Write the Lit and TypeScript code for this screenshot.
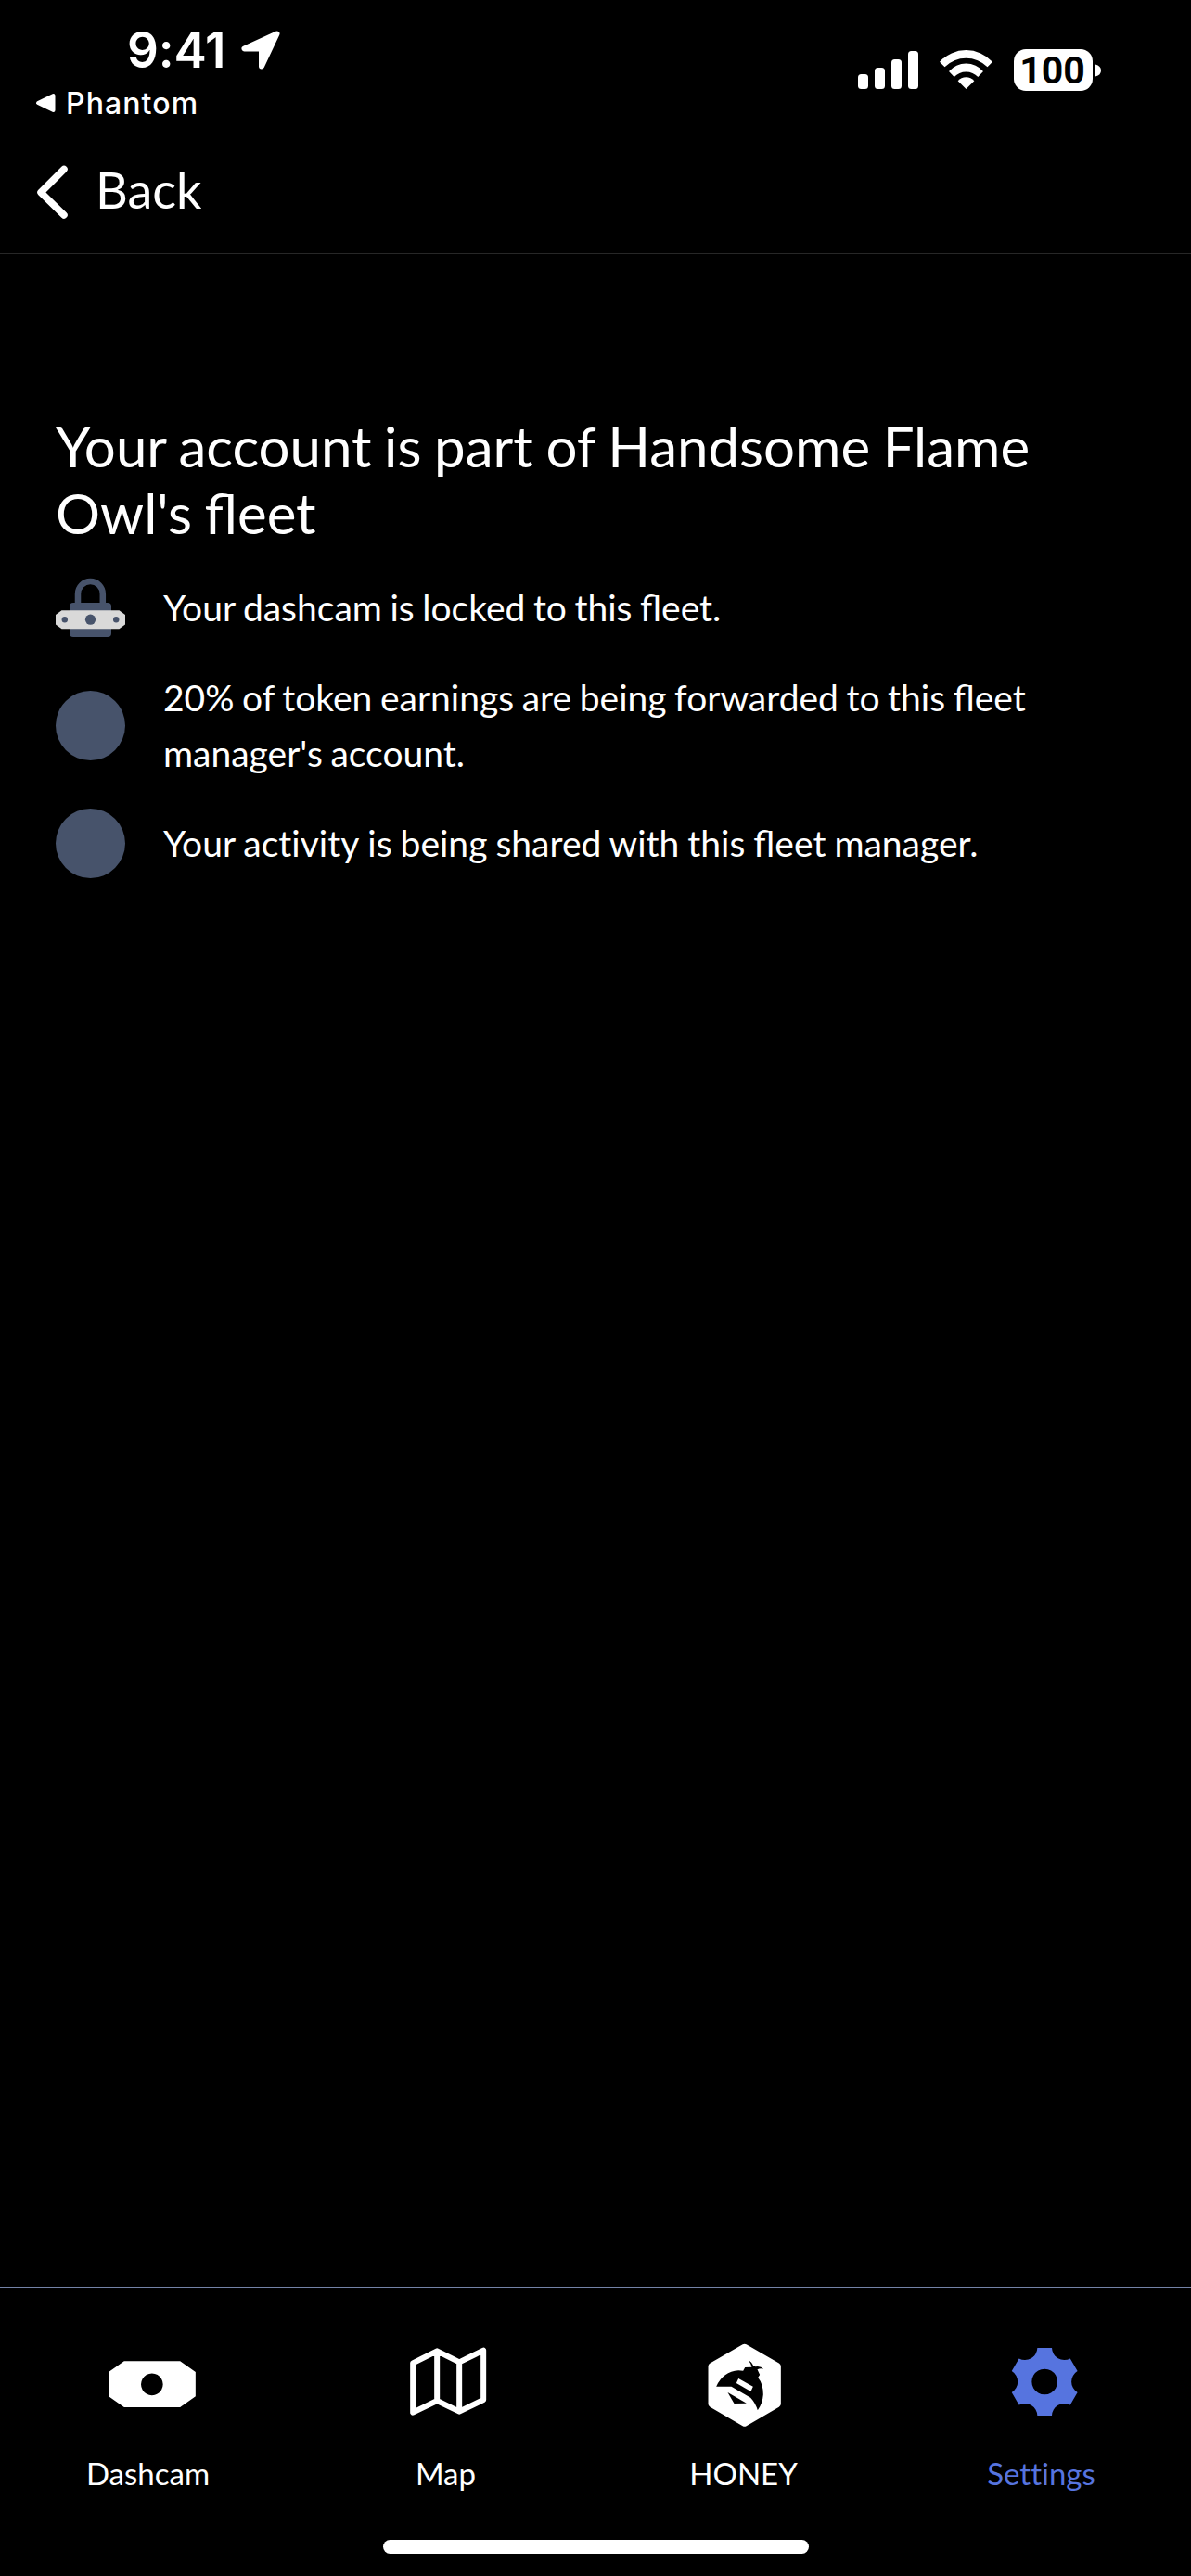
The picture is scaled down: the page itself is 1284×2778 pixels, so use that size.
import { LitElement, html, css, svg, TemplateResult } from "lit";
import { customElement, property } from "lit/decorators.js";

interface Tab {
  label: string;
  viewBox: string;
  icon: TemplateResult;
  active?: boolean;
}

const TABS: Tab[] = [
  {
    label: "Dashcam",
    viewBox: "119.5 240 360 330",
    icon: svg`<path fill="currentColor" fill-rule="evenodd" d="M221 319H402L452 354V433L402 468H221L171 433V354ZM311 358.5a35.5 35.5 0 1 0 .1 0Z"/>`,
  },
  {
    label: "Map",
    viewBox: "1082.5 240 360 330",
    icon: svg`<path fill="none" stroke="currentColor" stroke-width="18" stroke-linejoin="round" d="M1155 325L1233 286L1305 322L1383 284V444L1305 482L1233 447L1155 485ZM1233 286V447M1305 322V482"/>`,
  },
  {
    label: "HONEY",
    viewBox: "65.5 60 360 330",
    icon: svg`
      <path fill="currentColor" stroke="currentColor" stroke-width="24" stroke-linejoin="round" d="M247.500 95L353 156V277L247.500 338L142 277V156Z"/>
      <path fill="#000" d="M156 221Q178 173 228 169L243 170L249 159L271 158Q269 147 261 137Q271 141 276 154L283 157Q299 154 309 164Q298 161 289 166L297 183L291 192Q308 213 308 247Q306 276 290 298Q283 274 267 257L205 221Z"/>
      <path fill="currentColor" d="M228 195L275 221L268 237L221 210Z"/>
      <path fill="#000" d="M193 240L254 275L214 276Z"/>`,
  },
  {
    label: "Settings",
    viewBox: "69 60 360 330",
    active: true,
    icon: svg`<g transform="translate(258.500 205.500)"><path fill="currentColor" fill-rule="evenodd" d="M-23.500 -109.500H23.500A40.300 40.300 0 0 0 82.800 -75L106.300 -34.500A40.300 40.300 0 0 0 106.300 34.500L82.800 75A40.300 40.300 0 0 0 23.500 109.500H-23.500A40.300 40.300 0 0 0 -82.800 75L-106.300 34.500A40.300 40.300 0 0 0 -106.300 -34.500L-82.800 -75A40.300 40.300 0 0 0 -23.500 -109.500ZM0 -41.500a41.500 41.500 0 1 0 .1 0Z"/></g>`,
  },
];

@customElement("status-bar")
export class StatusBar extends LitElement {
  static styles = css`
    :host {
      display: flex;
      justify-content: space-between;
      box-sizing: border-box;
      height: 140px;
      padding: 0 97px 0 38px;
      font-family: Inter, "Liberation Sans", sans-serif;
      color: #fff;
    }
    .left {
      padding-top: 23px;
    }
    .clock {
      display: flex;
      align-items: center;
      gap: 16px;
      height: 62px;
      padding-left: 99px;
    }
    .time {
      font-size: 53px;
      line-height: 62px;
      font-weight: 600;
      letter-spacing: -0.1px;
    }
    .return {
      display: flex;
      align-items: center;
      gap: 9px;
      height: 40px;
      margin-top: 6px;
      font-size: 32px;
      font-weight: 500;
      letter-spacing: 1.1px;
    }
    .right {
      display: flex;
      align-items: flex-start;
      padding-top: 53px;
    }
    .battery {
      display: flex;
      align-items: center;
      gap: 3px;
      margin-left: 22px;
    }
    .level {
      box-sizing: border-box;
      width: 85px;
      height: 45px;
      padding-right: 2px;
      border-radius: 13px;
      background: #fff;
      color: #000;
      font-family: Roboto, Inter, sans-serif;
      font-size: 41px;
      line-height: 46px;
      font-weight: 700;
      text-align: center;
    }
    svg {
      display: block;
    }
  `;

  render() {
    return html`
      <div class="left">
        <div class="clock">
          <span class="time">9:41</span>
          <svg width="44" height="44" viewBox="0 0 44 44">
            <path fill="#fff" stroke="#fff" stroke-width="6" stroke-linejoin="round" d="M39.500 4.500L4.500 20.500H23V39.500Z" />
          </svg>
        </div>
        <div class="return">
          <svg width="24" height="24" viewBox="0 0 24 24">
            <path fill="#fff" stroke="#fff" stroke-width="4" stroke-linejoin="round" d="M3 12L19.500 4V20Z" />
          </svg>
          <span>Phantom</span>
        </div>
      </div>
      <div class="right">
        <svg width="146" height="45" viewBox="925 53 146 45">
          <g fill="#fff">
            <rect x="925" y="80" width="11" height="16" rx="3.500" />
            <rect x="943" y="73" width="11" height="23" rx="3.500" />
            <rect x="961" y="64" width="11" height="32" rx="3.500" />
            <rect x="979" y="55" width="11" height="41" rx="3.500" />
            <path d="M1013 66.700A38.500 38.500 0 0 1 1070 66.700L1064.500 72.300A32.600 32.600 0 0 0 1018.500 72.300Z" />
            <path d="M1023 77A24.500 24.500 0 0 1 1060 77L1054.300 83A17.500 17.500 0 0 0 1028.700 83Z" />
            <path d="M1032.700 87.300A11.500 11.500 0 0 1 1050.300 87.300L1041.500 96Z" />
          </g>
        </svg>
        <div class="battery">
          <div class="level">100</div>
          <svg width="6" height="14" viewBox="0 0 6 14"><path fill="#fff" d="M0 0.500Q6 2 6 7T0 13.500Z" /></svg>
        </div>
      </div>
    `;
  }
}

@customElement("tab-bar")
export class TabBar extends LitElement {
  @property({ attribute: false }) tabs: Tab[] = [];

  static styles = css`
    :host {
      display: flex;
      flex-direction: column;
      align-items: center;
      box-sizing: border-box;
      height: 312px;
      border-top: 1px solid #7483a8;
      color: #fff;
    }
    .tabs {
      display: grid;
      grid-template-columns: repeat(4, 321px);
      width: 1284px;
      height: 272px;
      margin-right: 2px;
      font-variant-ligatures: none;
    }
    .tab {
      display: flex;
      flex-direction: column;
      align-items: center;
      padding-top: 53px;
      font-size: 33px;
      line-height: 40px;
    }
    .active {
      color: #5674df;
    }
    .icon {
      display: block;
      width: 120px;
      height: 110px;
      margin-bottom: 17px;
    }
    .home {
      width: 459px;
      height: 15px;
      border-radius: 8px;
      background: #fff;
    }
  `;

  render() {
    return html`
      <div class="tabs">
        ${this.tabs.map(
          (t) => html`
            <div class="tab ${t.active ? "active" : ""}">
              <svg class="icon" viewBox=${t.viewBox}>${t.icon}</svg>
              <span>${t.label}</span>
            </div>
          `
        )}
      </div>
      <div class="home"></div>
    `;
  }
}

@customElement("app-root")
export class AppRoot extends LitElement {
  static styles = css`
    :host {
      display: flex;
      flex-direction: column;
      width: 1284px;
      height: 2778px;
      overflow: hidden;
      background: #000;
      color: #fff;
      font-family: Lato, "Liberation Sans", sans-serif;
    }
    .nav {
      display: flex;
      align-items: center;
      gap: 29px;
      box-sizing: border-box;
      height: 134px;
      padding: 0 0 0 38px;
      border-bottom: 1px solid #272727;
      font-size: 54px;
      line-height: 65px;
    }
    .back {
      padding-bottom: 5px;
    }
    .chevron {
      display: block;
      width: 36px;
      height: 60px;
    }
    .content {
      flex: 1;
      padding: 171px 60px 0;
    }
    .title {
      margin: 0 0 29px;
      font-size: 60px;
      line-height: 72px;
      font-weight: 400;
      word-spacing: -1.8px;
    }
    .list {
      display: flex;
      flex-direction: column;
      gap: 30px;
    }
    .item {
      display: flex;
      align-items: center;
      gap: 41px;
      min-height: 75px;
      font-size: 39px;
      line-height: 59.5px;
      word-spacing: -1.4px;
    }
    .item:last-child {
      word-spacing: -0.95px;
    }
    .text {
      flex: 1;
    }
    .plain {
      font-variant-ligatures: none;
    }
    .bullet {
      flex: none;
      width: 75px;
      height: 75px;
    }
    .dot {
      border-radius: 50%;
      background: #47536b;
    }
  `;

  render() {
    return html`
      <status-bar></status-bar>
      <div class="nav">
        <svg class="chevron" viewBox="0 0 36 60">
          <path fill="none" stroke="#fff" stroke-width="7.500" stroke-linecap="round" stroke-linejoin="round" d="M31 5.500L6 30.500L31 55" />
        </svg>
        <span class="back">Back</span>
      </div>
      <div class="content">
        <h1 class="title">Your account is part of Handsome Flame Owl's fleet</h1>
        <div class="list">
          <div class="item">
            <svg class="bullet" viewBox="60 618 75 75">
              <path fill="none" stroke="#47536b" stroke-width="6.500" d="M84 652V640.500a13.400 13.400 0 0 1 26.800 0V652" />
              <rect x="75" y="650" width="45" height="37" rx="4" fill="#47536b" />
              <path fill="#d9d9d9" d="M66.500 658.300H128.500L135 663V673.500L128.500 678.200H66.500L60 673.500V663Z" />
              <g fill="#47536b">
                <circle cx="69.800" cy="668.200" r="3.200" />
                <circle cx="97.500" cy="668.200" r="5.600" />
                <circle cx="125.200" cy="668.200" r="3.200" />
              </g>
            </svg>
            <div class="text">Your dashcam is locked to this fleet.</div>
          </div>
          <div class="item">
            <div class="bullet dot"></div>
            <div class="text">20% of token earnings are being forwarded to this fleet manager's account.</div>
          </div>
          <div class="item">
            <div class="bullet dot"></div>
            <div class="text">Your <span class="plain">activity</span> is being shared with this fleet manager.</div>
          </div>
        </div>
      </div>
      <tab-bar .tabs=${TABS}></tab-bar>
    `;
  }
}
